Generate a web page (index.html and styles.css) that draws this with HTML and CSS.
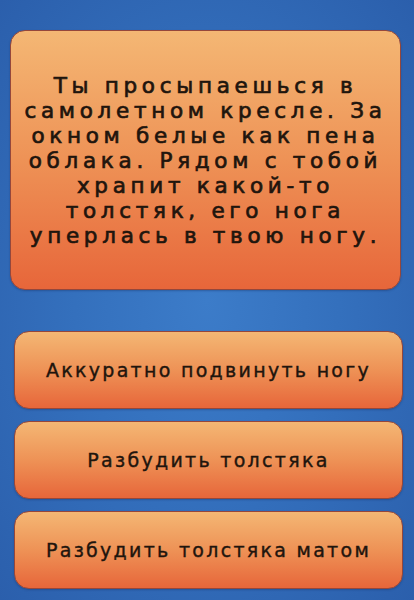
FILE: index.html
```html
<!DOCTYPE html>
<html lang="ru">
<head>
  <meta charset="UTF-8" />
  <meta name="viewport" content="width=device-width, initial-scale=1.0"/>
  <title>Полёт</title>
  <link rel="stylesheet" href="styles.css">
</head>
<body>

  <div id="story" class="card">
    <p>Ты просыпаешься в<br>самолетном кресле. За<br>окном белые как пена<br>облака. Рядом с тобой<br>храпит какой-то<br>толстяк, его нога<br>уперлась в твою ногу.</p>
  </div>

  <div id="choices">
    <button class="card choice">Аккуратно подвинуть ногу</button>
    <button class="card choice">Разбудить толстяка</button>
    <button class="card choice">Разбудить толстяка матом</button>
  </div>

</body>
</html>
```

FILE: styles.css
```css
body {
  margin: 0;
  height: 600px;
  padding-top: 30px;
  box-sizing: border-box;
  overflow: hidden;
  font-family: "DejaVu Sans", Verdana, sans-serif;
  color: #1f150d;
  background:
    radial-gradient(ellipse at 50% 50%, #3c7cc9 0%, #3470bd 45%, #2b5fac 100%);
}

/* оранжевая плашка, общая для текста и кнопок */
.card {
  border: 1px solid #95473b;
  border-radius: 15px;
  background: linear-gradient(to bottom, #f4b774 0%, #ee9256 50%, #e7663a 100%);
  box-shadow: 0 1px 2px rgba(20, 40, 90, 0.35);
}

#story {
  margin: 0 13px 0 10px;
  height: 260px;
  box-sizing: border-box;
  display: flex;
  align-items: center;
  justify-content: center;
  padding: 0;
}

#story p {
  margin: 0;
  text-align: center;
  white-space: nowrap;
  font-size: 21.5px;
  line-height: 25px;
  letter-spacing: 4.7px;
  -webkit-text-stroke: 0.7px #1f150d;
}

#choices {
  margin: 41px 11px 0 14px;
  display: flex;
  flex-direction: column;
  gap: 12px;
}

.choice {
  height: 78px;
  font-family: inherit;
  font-size: 19px;
  letter-spacing: 2.3px;
  color: #1f150d;
  -webkit-text-stroke: 0.4px #1f150d;
  text-align: center;
  padding: 0;
  cursor: pointer;
}
```
